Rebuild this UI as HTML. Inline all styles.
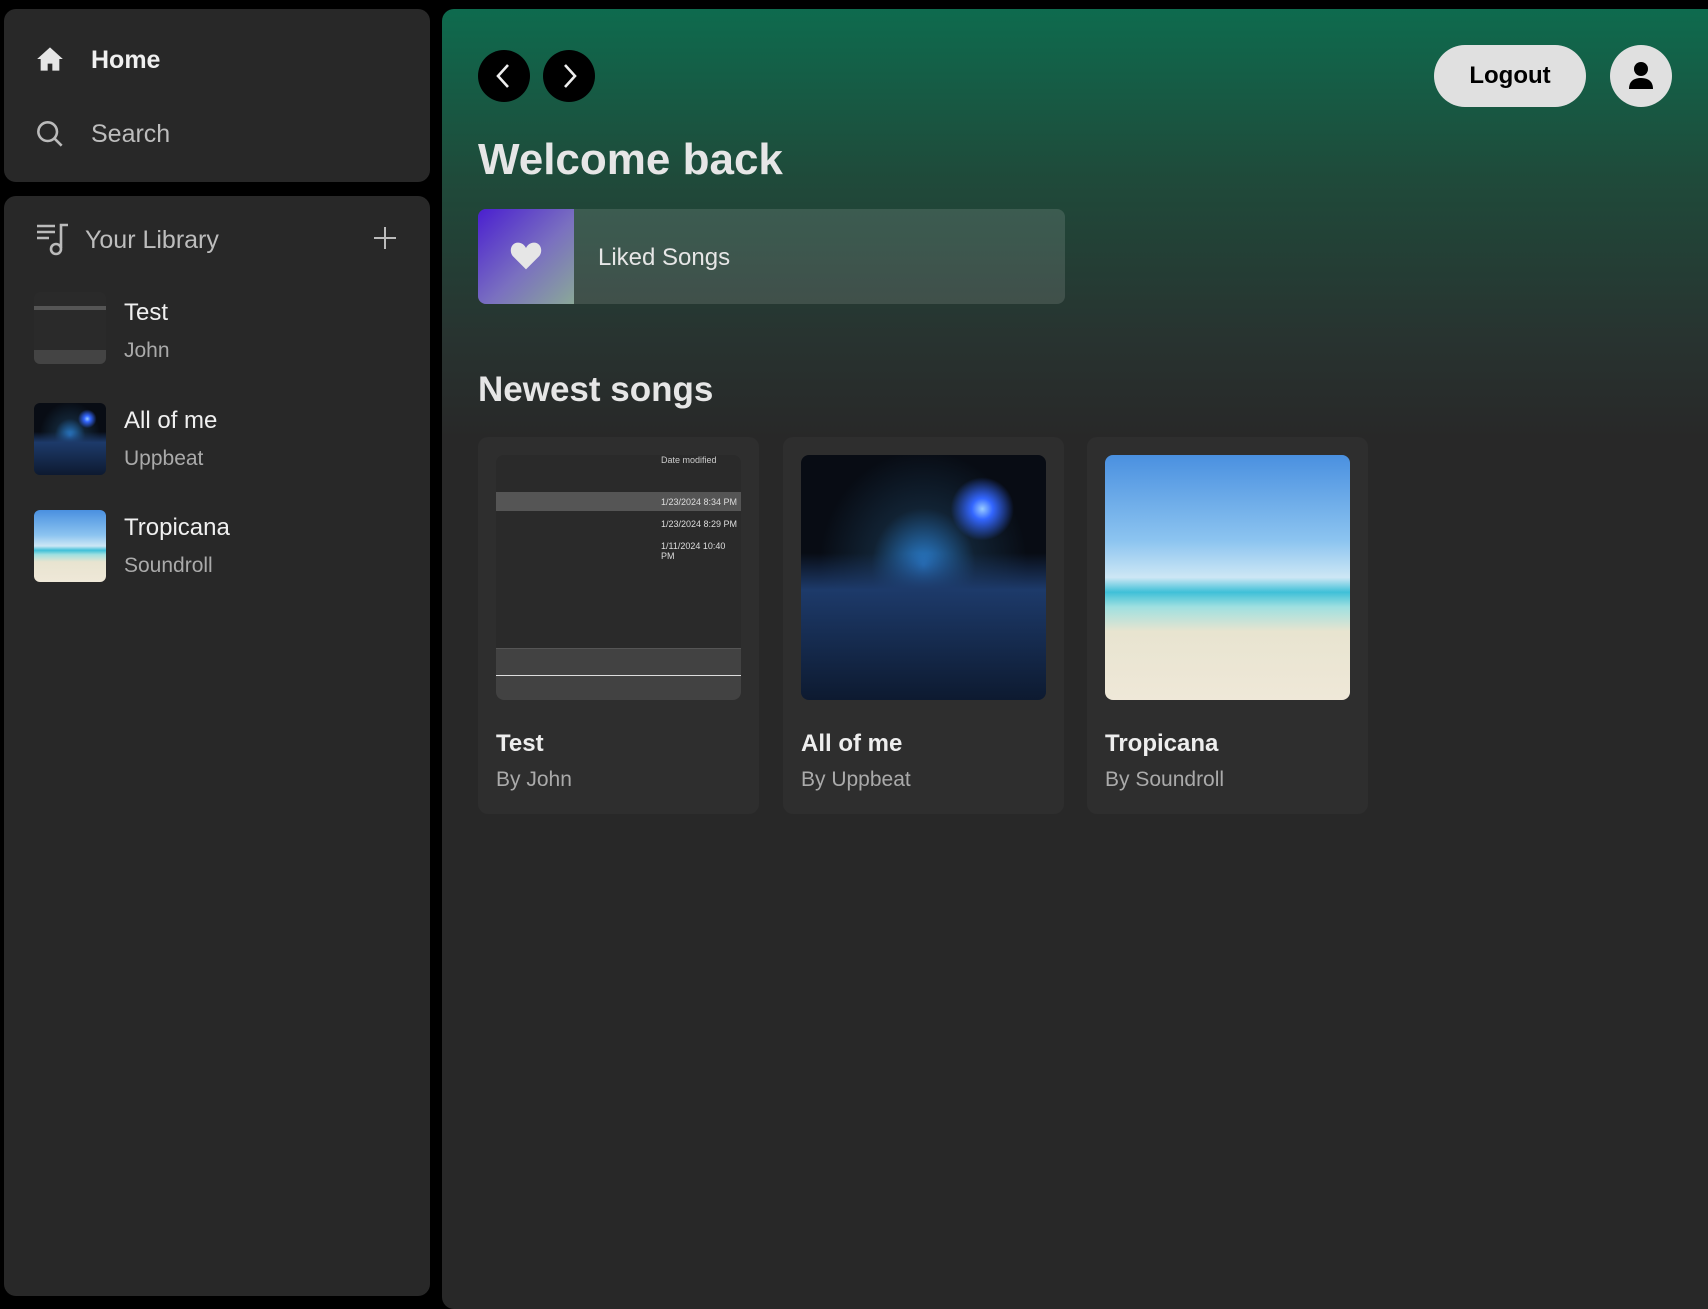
<!DOCTYPE html>
<html><head><meta charset="utf-8"><style>
*{margin:0;padding:0;box-sizing:border-box}
body{width:1708px;height:1225px;background:#000;font-family:"Liberation Sans",sans-serif;position:relative;overflow:hidden;color:#fff}
.p{position:absolute;background:#282828;border-radius:12px}
.a{position:absolute;white-space:nowrap}
.circ{position:absolute;width:52px;height:52px;border-radius:50%;background:#000}
.card{position:absolute;top:437px;width:281px;height:377px;background:#2e2e2e;border-radius:10px}
.card .img{position:absolute;left:18px;top:18px;width:245px;height:245px;border-radius:8px;overflow:hidden}
.card .t{position:absolute;left:18px;top:293px;font-size:24px;font-weight:bold;color:#eee}
.card .b{position:absolute;left:18px;top:331px;font-size:21px;color:#aaa}
.thumb{position:absolute;left:34px;width:72px;height:72px;border-radius:6px;overflow:hidden}
.night{background:radial-gradient(circle at 74% 22%,#9cf 0,#36f 4%,transparent 12%),linear-gradient(180deg,transparent 40%,#1d3a6a 55%,#0d1a30 100%),radial-gradient(ellipse at 50% 45%,#2a7fd0 0,#123 30%,#080c14 60%)}
.beach{background:linear-gradient(180deg,#4a90e0 0,#8cc4f0 35%,#cde7f5 50%,#3fc0d8 56%,#9fe0e0 62%,#e8e4d0 72%,#efe8d8 100%)}
</style></head><body>
<div class="p" style="left:4px;top:9px;width:426px;height:173px"></div>
<svg class="a" style="left:36px;top:45px" width="28" height="28" viewBox="0 0 24 24"><path d="M12 2 1 12h3v10h6v-6h4v6h6V12h3z" fill="#e6e6e6"/></svg>
<div class="a" style="left:91px;top:46px;font-size:25px;font-weight:bold;color:#f0f0f0">Home</div>
<svg class="a" style="left:36px;top:120px" width="28" height="28" viewBox="0 0 24 24" fill="none" stroke="#bbb" stroke-width="2.2"><circle cx="10" cy="10" r="8"/><path d="M16 16l6 6"/></svg>
<div class="a" style="left:91px;top:120px;font-size:25px;color:#bdbdbd">Search</div>

<div class="p" style="left:4px;top:196px;width:426px;height:1100px"></div>
<svg class="a" style="left:36px;top:222px" width="34" height="34" viewBox="0 0 34 34" fill="none" stroke="#bbb" stroke-width="2.6"><path d="M1 4h18M1 10h18M1 16h12M25 26V3h7"/><circle cx="20" cy="27" r="5"/></svg>
<div class="a" style="left:85px;top:226px;font-size:25px;color:#bdbdbd">Your Library</div>
<svg class="a" style="left:373px;top:226px" width="24" height="24" viewBox="0 0 24 24" stroke="#bbb" stroke-width="2"><path d="M12 1v22M1 12h22"/></svg>

<div class="thumb" style="top:292px;background:#2a2a2a"><div style="position:absolute;top:14px;left:0;width:72px;height:4px;background:#555"></div><div style="position:absolute;bottom:0;left:0;width:72px;height:14px;background:#444"></div></div>
<div class="a" style="left:124px;top:299px;font-size:24px;color:#f0f0f0">Test</div>
<div class="a" style="left:124px;top:339px;font-size:21px;color:#aaa">John</div>
<div class="thumb night" style="top:403px"></div>
<div class="a" style="left:124px;top:407px;font-size:24px;color:#f0f0f0">All of me</div>
<div class="a" style="left:124px;top:447px;font-size:21px;color:#aaa">Uppbeat</div>
<div class="thumb beach" style="top:510px"></div>
<div class="a" style="left:124px;top:514px;font-size:24px;color:#f0f0f0">Tropicana</div>
<div class="a" style="left:124px;top:554px;font-size:21px;color:#aaa">Soundroll</div>

<div class="p" style="left:442px;top:9px;width:1280px;height:1300px;background:linear-gradient(180deg,#0e6b4e 0,#1f4a3a 170px,#283330 330px,#282828 430px,#282828 100%)"></div>
<div class="circ" style="left:478px;top:50px"></div>
<svg class="a" style="left:492px;top:62px" width="24" height="28" viewBox="0 0 24 28" fill="none" stroke="#eee" stroke-width="2.6"><path d="M16 3 6 14l10 11"/></svg>
<div class="circ" style="left:543px;top:50px"></div>
<svg class="a" style="left:557px;top:62px" width="24" height="28" viewBox="0 0 24 28" fill="none" stroke="#eee" stroke-width="2.6"><path d="M8 3l10 11L8 25"/></svg>
<div class="a" style="left:1434px;top:45px;width:152px;height:62px;border-radius:31px;background:#e0e0e0;color:#000;font-size:24px;font-weight:bold;text-align:center;line-height:62px">Logout</div>
<div class="a" style="left:1610px;top:45px;width:62px;height:62px;border-radius:50%;background:#e0e0e0"></div>
<svg class="a" style="left:1627px;top:61px" width="28" height="30" viewBox="0 0 28 30" fill="#000"><circle cx="14" cy="8" r="7"/><path d="M2 28c0-8 5-11 12-11s12 3 12 11z"/></svg>
<div class="a" style="left:478px;top:135px;font-size:44px;font-weight:bold;color:#e6e6e6">Welcome back</div>
<div class="a" style="left:478px;top:209px;width:587px;height:95px;border-radius:8px;background:rgba(255,255,255,.12);overflow:hidden"><div style="position:absolute;left:0;top:0;width:96px;height:95px;background:linear-gradient(135deg,#4a1fd0,#7a70c0 55%,#8aa898)"></div>
<svg style="position:absolute;left:32px;top:32px" width="32" height="30" viewBox="0 0 24 22"><path d="M12 21 2 11C-1 7 1 1 6 1c3 0 5 2 6 4 1-2 3-4 6-4 5 0 7 6 4 10z" fill="#e6e6e6"/></svg>
<div style="position:absolute;left:120px;top:35px;font-size:24px;color:#e6e6e6">Liked Songs</div></div>
<div class="a" style="left:478px;top:370px;font-size:35px;font-weight:bold;color:#e6e6e6">Newest songs</div>

<div class="card" style="left:478px"><div class="img" style="background:#2a2a2a">
<div style="position:absolute;left:0;top:37px;width:245px;height:19px;background:#555"></div>
<div style="position:absolute;left:165px;top:0;font-size:9px;color:#ccc">Date modified</div>
<div style="position:absolute;left:165px;top:42px;font-size:9px;color:#ddd">1/23/2024 8:34 PM</div>
<div style="position:absolute;left:165px;top:64px;font-size:9px;color:#ddd">1/23/2024 8:29 PM</div>
<div style="position:absolute;left:165px;top:86px;font-size:9px;color:#ddd">1/11/2024 10:40 PM</div>
<div style="position:absolute;left:0;top:193px;width:245px;height:52px;background:#424242;border-top:1px solid #555"></div>
<div style="position:absolute;left:0;top:220px;width:245px;height:1px;background:#ddd"></div>
</div><div class="t">Test</div><div class="b">By John</div></div>
<div class="card" style="left:783px"><div class="img night"></div><div class="t">All of me</div><div class="b">By Uppbeat</div></div>
<div class="card" style="left:1087px"><div class="img beach"></div><div class="t">Tropicana</div><div class="b">By Soundroll</div></div>
</body></html>
